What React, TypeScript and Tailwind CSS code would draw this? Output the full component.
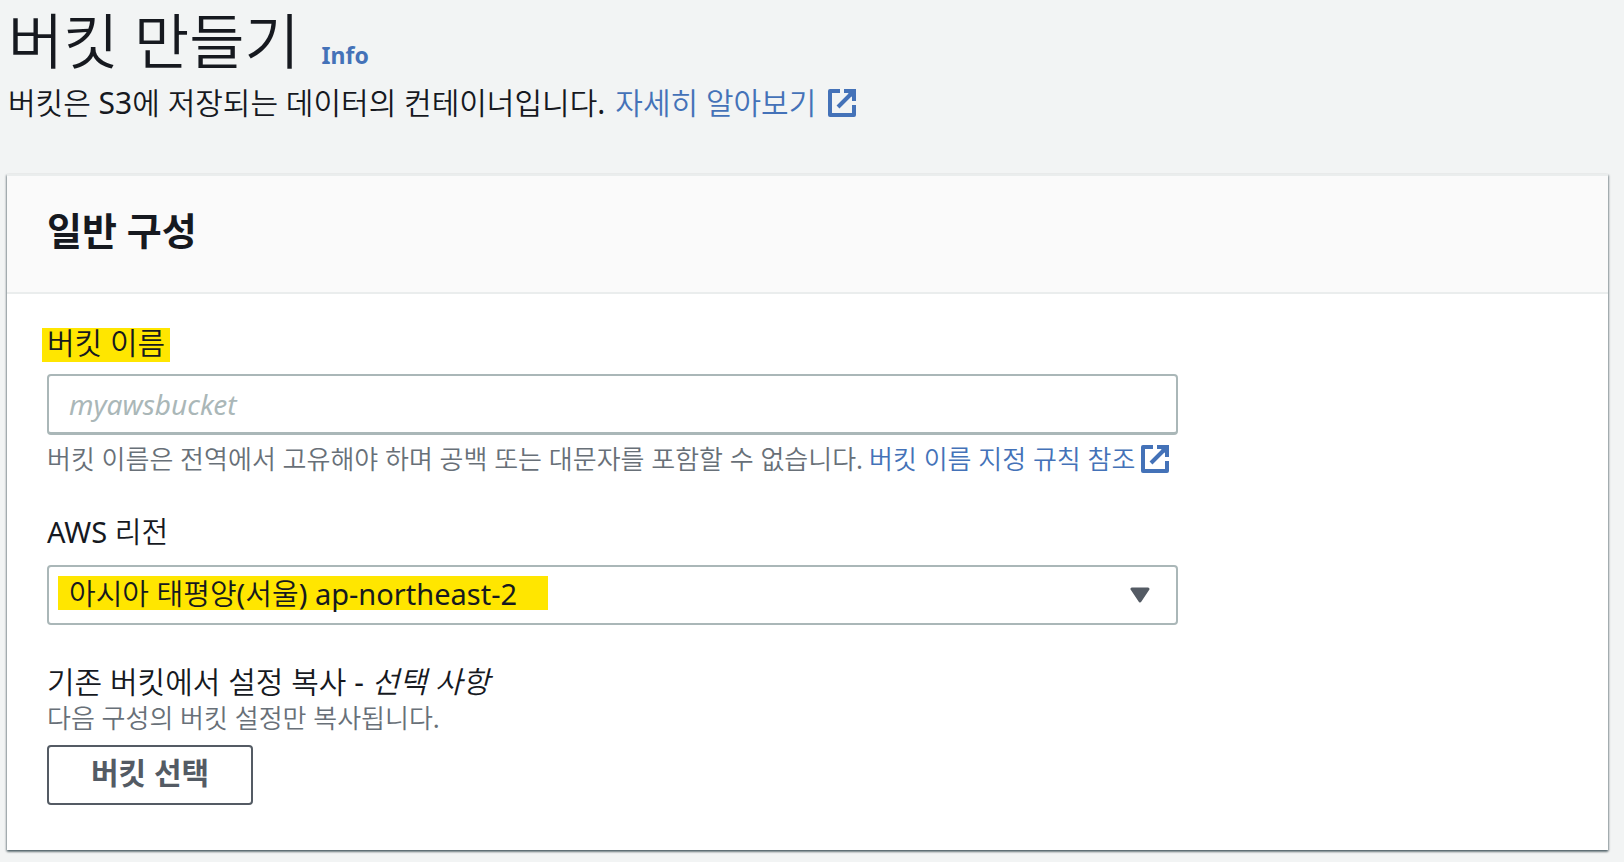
import React, { useState } from 'react';

const REGIONS = [
  { id: 'ap-northeast-2', name: '아시아 태평양(서울) ap-northeast-2' },
  { id: 'ap-northeast-1', name: '아시아 태평양(도쿄) ap-northeast-1' },
  { id: 'us-east-1', name: '미국 동부(버지니아 북부) us-east-1' }
];

const ExternalIcon: React.FC<{ className?: string }> = ({ className = '' }) => (
  <svg viewBox="0 0 28 28" className={`inline-block h-7 w-7 shrink-0 ${className}`} fill="none" stroke="currentColor" strokeWidth="4" aria-hidden="true">
    <path d="M12 2H2v24h24V16" strokeLinejoin="round" />
    <path d="M10 18L24 4" />
    <path d="M16 0h12v12h-4V8l-4-4h-4z" fill="currentColor" stroke="none" />
  </svg>
);

const App: React.FC = () => {
  const [bucketName, setBucketName] = useState('');
  const [region, setRegion] = useState(REGIONS[0].id);

  return (
    <div className="min-h-screen bg-[#f2f4f4] pr-4 pb-3 pl-[7px] font-['Noto_Sans','Noto_Sans_CJK_KR_DemiLight','Noto_Sans_CJK_KR',sans-serif] text-[#16191f]">
      <header className="pb-[52px] pl-px">
        <h1 className="flex items-baseline gap-[22px] text-[60px] leading-[82px]">
          버킷 만들기
          <a href="#info" className="text-[23px] leading-8 font-bold text-[#4472b8]">Info</a>
        </h1>
        <p className="flex items-center gap-2.5 pt-0.5 text-[30px] leading-[38px]">
          버킷은 S3에 저장되는 데이터의 컨테이너입니다.
          <a href="#learn-more" className="flex items-center gap-3 text-[#4472b8]">
            자세히 알아보기
            <ExternalIcon />
          </a>
        </p>
      </header>

      <main className="border-t-2 border-[#eaeded] bg-white shadow-[0_2px_2px_0_rgba(0,28,36,0.4),1px_1px_2px_0_rgba(0,28,36,0.3),-1px_1px_2px_0_rgba(0,28,36,0.3)]">
        <div className="border-b-2 border-[#eaeded] bg-[#fafafa] px-10 pt-8 pb-10">
          <h2 className="font-['Noto_Sans','Noto_Sans_CJK_KR',sans-serif] text-[38px] leading-[44px] font-bold">일반 구성</h2>
        </div>

        <form className="max-w-[1211px] px-10 pt-[34px] pb-[45px]" onSubmit={e => e.preventDefault()}>
          <div className="mb-9">
            <label htmlFor="bucket-name" className="-ml-[5px] inline-block bg-[#ffe600] px-[5px] pb-1 text-[30px] leading-[30px]">
              버킷 이름
            </label>
            <input
              id="bucket-name"
              type="text"
              placeholder="myawsbucket"
              value={bucketName}
              onChange={e => setBucketName(e.target.value)}
              className="mt-3 block h-[61px] w-full rounded border-2 border-b-3 border-[#aab7b8] px-5 text-[28px] placeholder:text-[#aab7b8] placeholder:italic"
            />
            <p className="mt-2 flex items-center gap-1.5 text-[26px] leading-8 text-[#687078]">
              버킷 이름은 전역에서 고유해야 하며 공백 또는 대문자를 포함할 수 없습니다.
              <a href="#naming-rules" className="flex items-center gap-1.5 text-[#4472b8]">
                버킷 이름 지정 규칙 참조
                <ExternalIcon />
              </a>
            </p>
          </div>

          <div className="mb-9">
            <label htmlFor="region" className="block text-[29px] leading-[42px]">AWS 리전</label>
            <div className="relative mt-3">
              <select
                id="region"
                value={region}
                onChange={e => setRegion(e.target.value)}
                className="block h-[60px] w-full appearance-none rounded border-2 border-[#aab7b8] bg-[linear-gradient(#ffe600,#ffe600)] bg-[length:490px_34px] bg-[position:9px_9px] bg-no-repeat px-5 pb-0.5 text-[29px]"
              >
                {REGIONS.map(r => <option key={r.id} value={r.id}>{r.name}</option>)}
              </select>
              <svg viewBox="0 0 20 16" className="pointer-events-none absolute top-[22px] right-7 h-4 w-5 text-[#545b64]" aria-hidden="true">
                <path d="M2 2h16l-8 12z" fill="currentColor" stroke="currentColor" strokeWidth="3" strokeLinejoin="round" />
              </svg>
            </div>
          </div>

          <div>
            <h3 className="text-[30px] leading-[42px]">
              기존 버킷에서 설정 복사 - <em>선택 사항</em>
            </h3>
            <p className="text-[26px] leading-[30px] text-[#687078]">다음 구성의 버킷 설정만 복사됩니다.</p>
            <button type="button" className="mt-3 h-[60px] rounded border-2 border-[#545b64] px-[42px] pb-1 font-['Noto_Sans','Noto_Sans_CJK_KR',sans-serif] text-[30px] leading-[42px] font-bold text-[#545b64]">
              버킷 선택
            </button>
          </div>
        </form>
      </main>
    </div>
  );
};

export default App;
